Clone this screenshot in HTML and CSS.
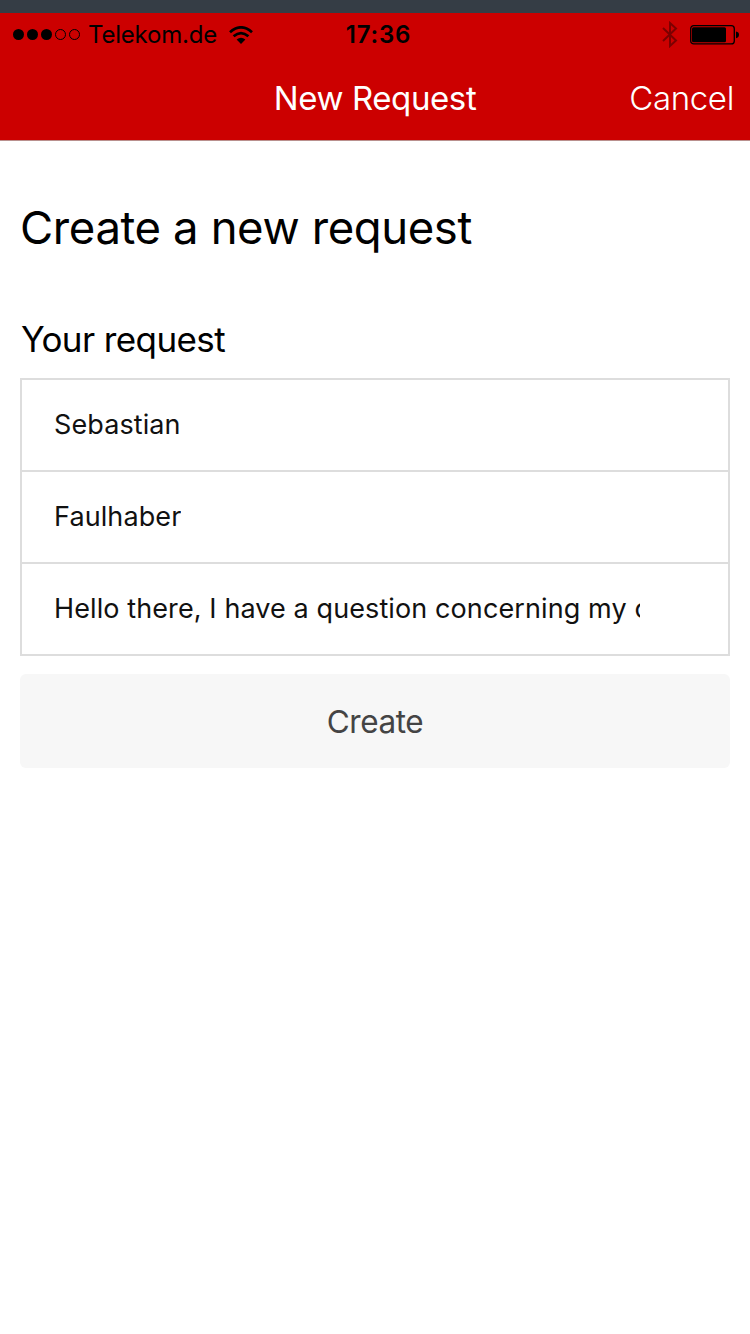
FILE: index.html
```html
<!DOCTYPE html>
<html lang="en">
<head>
<meta charset="utf-8">
<title>New Request</title>
<link rel="stylesheet" href="styles.css">
</head>
<body>
<div class="screen">
  <div class="backdrop"></div>
  <header class="header">
    <div class="status">
      <div class="carrier">
        <svg class="signal" width="68" height="12" viewBox="0 0 68 12"><circle cx="5.500" cy="5.500" r="5.500"/><circle cx="19.500" cy="5.500" r="5.500"/><circle cx="33.500" cy="5.500" r="5.500"/><circle class="ring" cx="47.500" cy="5.500" r="5"/><circle class="ring" cx="61.500" cy="5.500" r="5"/></svg>
        <span class="carrier-name">Telekom.de</span>
        <svg class="wifi" width="24" height="18" viewBox="0 0 24 18"><path d="M1 6.200Q12-3.400 23 6.200M4.600 10.300Q12 4 19.400 10.300"/><path class="solid" d="M7.600 13.500Q12 10 16.400 13.500L12 18Z"/></svg>
      </div>
      <time class="clock">17:36</time>
      <div class="power">
        <svg class="bluetooth" width="16" height="27" viewBox="0 0 16 27"><path d="M1 7L14 19.500L8 25V2L14 7.500L1 20"/></svg>
        <svg class="battery" width="49" height="20" viewBox="0 0 49 20"><rect class="case" x=".7" y=".7" width="43.600" height="18.200" rx="3"/><rect x="2" y="2.300" width="34" height="15" rx="1.500"/><path d="M46 6.500Q49 7 49 9.800T46 13.200Z"/></svg>
      </div>
    </div>
    <nav class="navbar">
      <span class="nav-title">New Request</span>
      <a class="cancel">Cancel</a>
    </nav>
  </header>
  <main class="content">
    <h1 class="title">Create a new request</h1>
    <h2 class="subtitle">Your request</h2>
    <form class="form">
      <div class="field"><span class="value">Sebastian</span></div>
      <div class="field"><span class="value">Faulhaber</span></div>
      <div class="field"><span class="value">Hello there, I have a question concerning my c</span></div>
    </form>
    <button class="create" type="button"><span class="create-label">Create</span></button>
  </main>
</div>
</body>
</html>
```
FILE: styles.css
```css
* { box-sizing: border-box; }
body { margin: 0; background: #fff; color: #000; font-family: Inter, sans-serif; }
.screen { width: 750px; height: 1334px; overflow: hidden; }
.backdrop { height: 13px; background: #353d45; }
.header { height: 128px; background: #cc0000; border-bottom: 1px solid #b9908e; }
.status { display: grid; grid-template-columns: 1fr auto 1fr; height: 43px; align-items: center; padding: 0 11px 0 13px; }
.carrier { display: flex; align-items: center; }
.carrier-name { margin: 0 12px 0 7px; font-size: 24px; font-weight: 370; letter-spacing: -.2px; }
.ring { fill: none; stroke: #000; stroke-width: 1; }
.wifi { fill: none; stroke: #000; stroke-width: 2.8; }
.solid { fill: #000; stroke: none; }
.clock { font-size: 24px; font-weight: 600; letter-spacing: .8px; padding-left: 5px; }
.power { display: flex; align-items: center; justify-content: flex-end; gap: 12px; }
.bluetooth { fill: none; stroke: #7c0000; stroke-width: 2; }
.case { fill: none; stroke: #000; stroke-width: 1.3; }
.navbar { display: grid; grid-template-columns: 1fr auto 1fr; height: 84px; align-items: center; padding: 0 16px; color: #fff; font-size: 33px; letter-spacing: -.4px; }
.nav-title { grid-column: 2; font-weight: 380; }
.cancel { justify-self: end; font-weight: 300; letter-spacing: -.35px; }
.content { padding: 59px 20px 0; }
.title { margin: 0; font-size: 45.5px; line-height: 56px; font-weight: 400; letter-spacing: -.4px; white-space: nowrap; }
.subtitle { margin: 61px 0 0 1px; font-size: 35px; line-height: 44px; font-weight: 400; letter-spacing: -.6px; }
.form { margin-top: 17px; border: 2px solid #ddd; height: 278px; }
.field { height: 92px; padding: 0 88px 0 32px; border-bottom: 2px solid #ddd; display: flex; align-items: center; }
.field:last-child { height: 90px; border-bottom: 0; }
.value { overflow: hidden; white-space: nowrap; font-size: 27px; line-height: 40px; font-weight: 380; letter-spacing: .1px; color: #111; }
.create { display: block; width: 710px; height: 94px; margin-top: 18px; padding: 1px 0 0; border: 0; border-radius: 6px; background: #f7f7f7; color: #444; font: 400 31.5px Inter, sans-serif; letter-spacing: -.45px; }
```
